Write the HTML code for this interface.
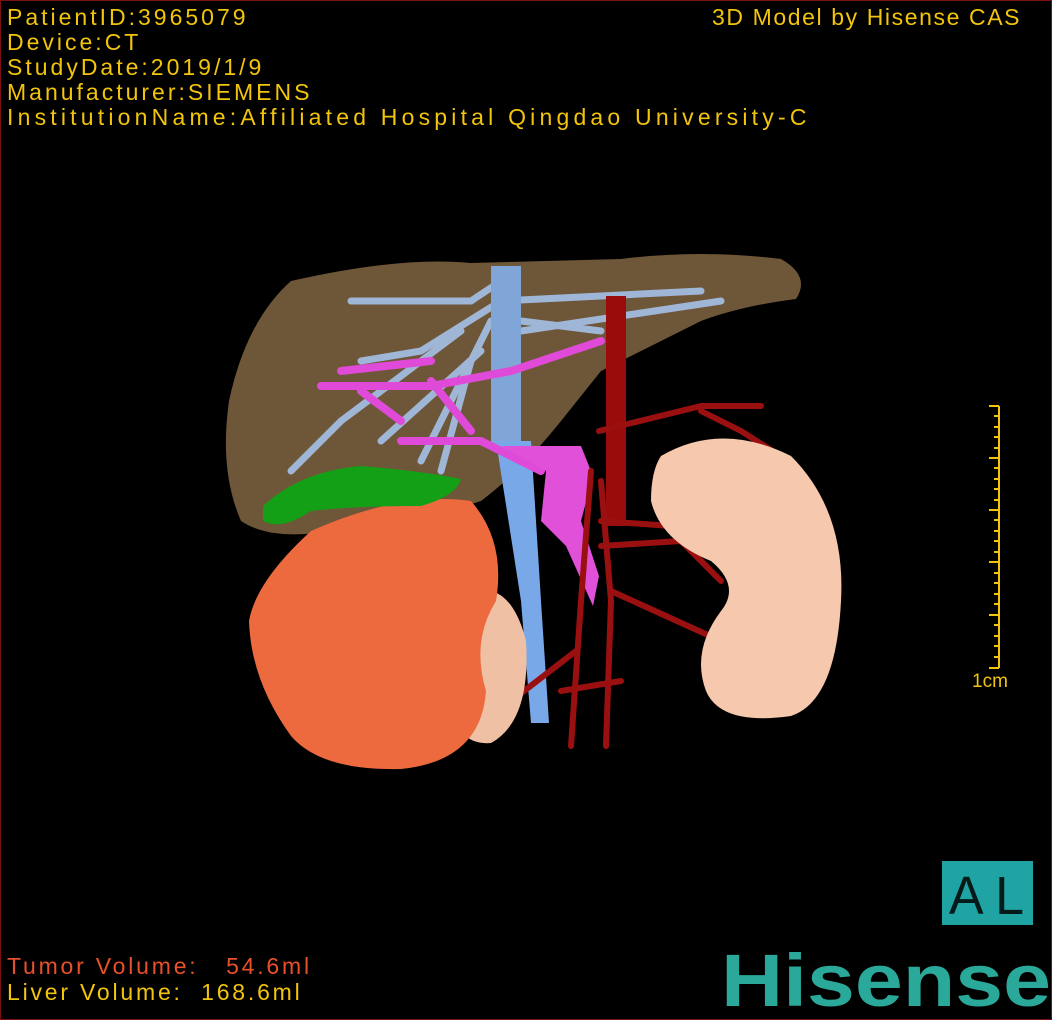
<!DOCTYPE html>
<html><head><style>
html,body{margin:0;padding:0;background:#000;}
#f{position:relative;width:1050px;height:1018px;border:1px solid #7a1010;background:#000;overflow:hidden;}
.t{position:absolute;color:#f2c40c;font-size:23px;line-height:25px;white-space:pre;font-family:"Liberation Sans",sans-serif;letter-spacing:3px;}
</style></head><body><div id="f">
<div class="t" style="left:6px;top:4px">PatientID:3965079
Device:CT
StudyDate:2019/1/9
Manufacturer:SIEMENS</div>
<div class="t" style="left:6px;top:104px;letter-spacing:4.2px">InstitutionName:Affiliated Hospital Qingdao University-C</div>
<div class="t" style="left:711px;top:4px;letter-spacing:1.6px">3D Model by Hisense CAS</div>
<div class="t" style="left:6px;top:953px;color:#e8502a;letter-spacing:2.8px">Tumor Volume:   54.6ml</div>
<div class="t" style="left:6px;top:979px;letter-spacing:2.8px">Liver Volume:  168.6ml</div>
<svg width="1050" height="1018" style="position:absolute;left:0;top:0">
<path d="M290 280 Q400 255 470 262 L620 258 Q700 248 780 258 Q810 275 795 298 Q740 305 700 320 Q650 345 600 370 L560 420 Q520 470 480 500 Q420 520 330 530 Q270 540 240 520 Q218 470 228 400 Q245 320 290 280Z" fill="#6e5638"/>
<g stroke="#9fb6d6" stroke-width="7" fill="none" stroke-linecap="round">
<path d="M500 300 L420 350 L360 360"/><path d="M500 300 L700 290"/><path d="M490 320 L440 420 L420 460"/><path d="M460 330 L340 420 L290 470"/><path d="M520 320 L600 330"/><path d="M480 350 L380 440"/><path d="M500 280 L470 300 L350 300"/><path d="M520 330 L720 300"/><path d="M470 360 L440 470"/>
</g>
<rect x="490" y="265" width="30" height="180" fill="#7fa6d6"/>
<path d="M495 440 L530 440 L540 600 L548 722 L530 722 L520 600 Z" fill="#78a8e8"/>
<g stroke="#e04ad8" stroke-width="8" fill="none" stroke-linecap="round">
<path d="M320 385 L430 385 L510 370 L600 340"/><path d="M340 370 L430 360"/><path d="M400 440 L480 440 L540 470"/><path d="M430 380 L470 430"/><path d="M360 390 L400 420"/>
</g>
<path d="M500 445 L580 445 L592 475 L580 520 L598 575 L592 605 L565 545 L540 520 L545 470 Z" fill="#e050d8"/>
<rect x="605" y="295" width="20" height="230" fill="#9a0c0c"/>
<g stroke="#9a1010" stroke-width="6" fill="none" stroke-linecap="round">
<path d="M598 430 L700 405 L760 405"/><path d="M700 410 L740 430 L795 465"/><path d="M590 470 L580 600 L570 745"/><path d="M600 480 L610 600 L605 745"/><path d="M600 545 L680 540 L720 580"/><path d="M610 590 L720 640"/><path d="M575 650 L510 700"/><path d="M560 690 L620 680"/><path d="M600 520 L670 525"/>
</g>
<path d="M660 455 Q720 420 790 455 Q845 510 840 600 Q835 700 790 715 Q720 725 705 690 Q690 650 720 610 Q740 585 710 560 Q660 540 650 500 Q650 470 660 455Z" fill="#f6c8ae"/>
<path d="M470 590 Q510 580 525 640 Q530 720 490 742 Q455 745 450 700 Z" fill="#f0c0a4"/>
<path d="M310 530 Q400 490 470 500 Q505 540 495 600 Q470 640 485 690 Q480 760 400 768 Q320 770 290 735 Q250 680 248 620 Q255 580 310 530Z" fill="#ec6a3e"/>
<path d="M262 505 Q300 470 360 465 Q420 470 460 478 Q455 495 420 505 Q350 505 310 510 Q280 530 262 520 Z" fill="#14a016"/>
<g stroke="#f2c40c" stroke-width="2">
<line x1="998" y1="405" x2="998" y2="667"/>
<line x1="988" y1="405" x2="998" y2="405"/><line x1="988" y1="457" x2="998" y2="457"/><line x1="988" y1="509" x2="998" y2="509"/><line x1="988" y1="561" x2="998" y2="561"/><line x1="988" y1="614" x2="998" y2="614"/><line x1="988" y1="667" x2="998" y2="667"/>
<path d="M993 415h5M993 426h5M993 436h5M993 447h5M993 467h5M993 478h5M993 488h5M993 499h5M993 519h5M993 530h5M993 540h5M993 551h5M993 572h5M993 582h5M993 593h5M993 603h5M993 624h5M993 635h5M993 645h5M993 656h5"/>
</g>
<text x="971" y="686" fill="#f2c40c" font-size="19" font-family="Liberation Sans">1cm</text>
<rect x="941" y="860" width="91" height="64" fill="#1fa3a3"/>
<text x="948" y="913" fill="#061a1a" font-size="54" font-family="Liberation Sans" textLength="75" lengthAdjust="spacingAndGlyphs">A L</text>
<text x="720" y="1005" fill="#2aa89a" font-size="74" font-weight="bold" font-family="Liberation Sans" textLength="330" lengthAdjust="spacingAndGlyphs">Hisense</text>
</svg>
</div></body></html>
